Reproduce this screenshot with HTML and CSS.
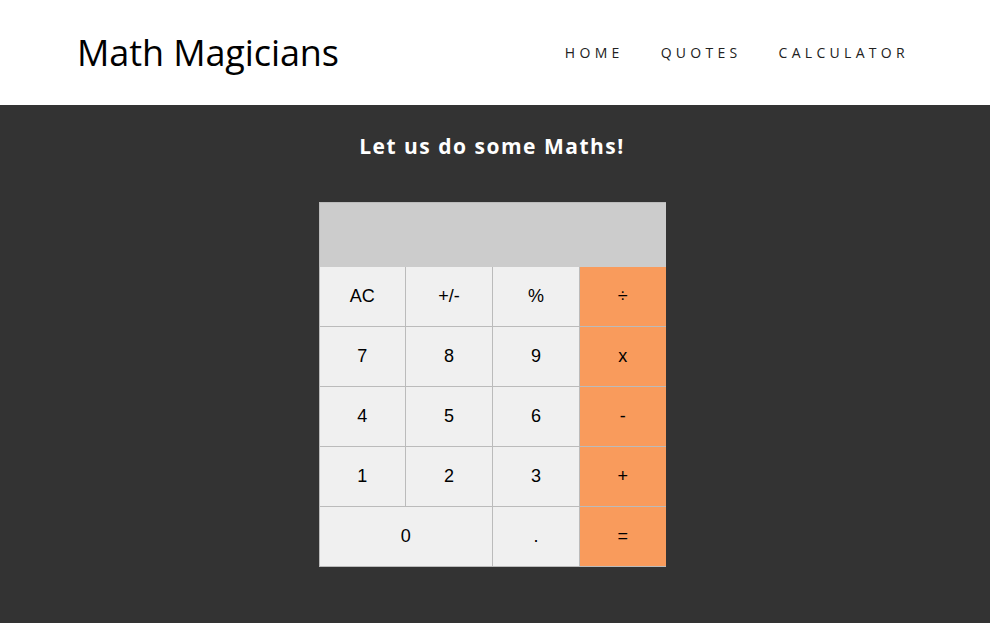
FILE: index.html
```html
<!DOCTYPE html>
<html lang="en">
<head>
<meta charset="utf-8">
<title>Math Magicians</title>
<link rel="stylesheet" href="styles.css">
</head>
<body>
<header class="header">
  <h1 class="logo">Math Magicians</h1>
  <nav class="nav">
    <a href="#" class="nav-link">Home</a>
    <a href="#" class="nav-link">Quotes</a>
    <a href="#" class="nav-link">Calculator</a>
  </nav>
</header>
<main class="main">
  <h2 class="title">Let us do some Maths!</h2>
  <div class="calc">
    <div class="display"></div>
    <button class="key">AC</button>
    <button class="key">+/-</button>
    <button class="key">%</button>
    <button class="key op">÷</button>
    <button class="key">7</button>
    <button class="key">8</button>
    <button class="key">9</button>
    <button class="key op">x</button>
    <button class="key">4</button>
    <button class="key">5</button>
    <button class="key">6</button>
    <button class="key op">-</button>
    <button class="key">1</button>
    <button class="key">2</button>
    <button class="key">3</button>
    <button class="key op">+</button>
    <button class="key wide">0</button>
    <button class="key">.</button>
    <button class="key op">=</button>
  </div>
</main>
</body>
</html>
```
FILE: styles.css
```css
* { box-sizing: border-box; }
html, body { margin: 0; padding: 0; height: 100%; }
body {
  background: #333;
  font-family: "Open Sans", "Noto Sans", sans-serif;
}
.header {
  background: #fff;
  height: 105px;
  display: flex;
  align-items: center;
  justify-content: space-between;
  padding: 0 81px 0 77px;
}
.logo {
  margin: 0;
  font-weight: 400;
  font-size: 36px;
  color: #000;
  letter-spacing: -0.1px;
}
.nav {
  display: flex;
  gap: 37px;
}
.nav-link {
  color: #222;
  text-decoration: none;
  text-transform: uppercase;
  font-size: 14px;
  letter-spacing: 4.3px;
}
.main {
  display: flex;
  flex-direction: column;
  align-items: center;
  padding-right: 6px;
}
.title {
  margin: 26px 0 0;
  color: #fff;
  font-size: 21px;
  font-weight: 700;
  letter-spacing: 1.5px;
  height: 71px;
  line-height: 30px;
}
.calc {
  width: 347px;
  display: grid;
  grid-template-columns: 86.5px 87px 87px 85.5px;
  grid-template-rows: 64px repeat(5, 60px);
  border: 1px solid #bbb;
  border-bottom: none;
  background: #bbb;
}
.display {
  grid-column: 1 / -1;
  background: #ccc;
}
.key {
  border: none;
  border-right: 1px solid #bbb;
  border-bottom: 1px solid #bbb;
  background: #f0f0f0;
  font-family: "Liberation Sans", Arial, sans-serif;
  font-size: 18px;
  color: #000;
  padding: 0;
  margin: 0;
}
.wide { grid-column: span 2; }
.op { background: #f99b5c; border-right: none; }
```
